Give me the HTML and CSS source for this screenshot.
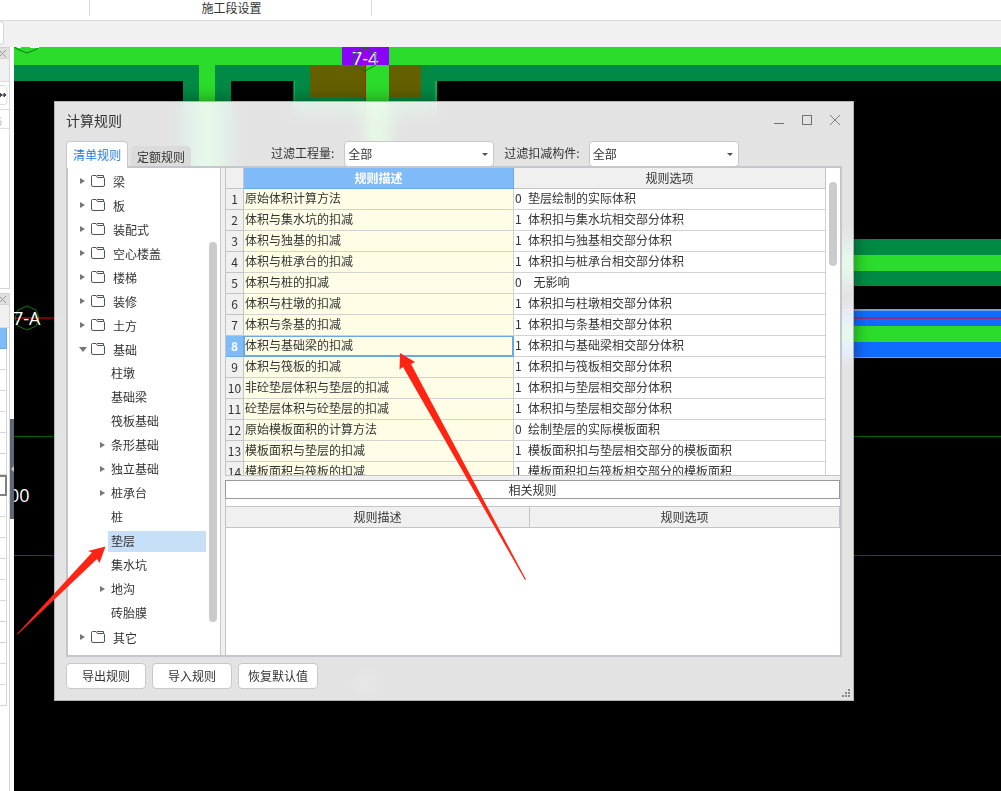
FILE: index.html
```html
<!DOCTYPE html>
<html lang="zh-CN">
<head>
<meta charset="utf-8">
<title>计算规则</title>
<link rel="stylesheet" href="styles.css">
</head>
<body>
<div class="app">
  <header class="ribbon">
    <div class="ribbon-group ribbon-group-edge"></div>
    <div class="ribbon-group ribbon-group-stage">施工段设置</div>
  </header>
  <div class="toolbar"><div class="toolbar-box"></div></div>

  <main class="workspace">
    <aside class="dock">
      <section class="dock-panel dock-panel-list">
        <div class="dock-title"><svg width="7" height="9"><path d="M-1 1 L6 8 M6 1 L-1 8"/></svg></div>
        <div class="dock-bar"></div>
        <div class="dock-tools"><svg width="8" height="20"><rect class="tool-frame" x="-6" y=".5" width="13" height="19" rx="3"/><path class="tool-arrow" d="M-2 10h3M2 10h3M0 8l2 2-2 2zM4 8l2 2-2 2z"/></svg></div>
        <div class="dock-search"><svg width="3" height="9"><path d="M-2 1h3M-2 4h3M1 4v4h-3"/></svg></div>
        <div class="dock-body"></div>
      </section>
      <section class="dock-panel dock-panel-props">
        <div class="dock-title"><svg width="7" height="9"><path d="M-1 1 L6 8 M6 1 L-1 8"/></svg></div>
        <div class="dock-bar"></div>
        <div class="prop-row prop-head"></div>
        <div class="prop-row"></div><div class="prop-row"></div><div class="prop-row"></div>
        <div class="prop-row"></div><div class="prop-row"></div><div class="prop-row"></div>
        <div class="prop-row prop-edit"></div>
        <div class="prop-row"></div><div class="prop-row"></div><div class="prop-row"></div>
        <div class="prop-row"></div><div class="prop-row"></div><div class="prop-row"></div>
        <div class="prop-row"></div><div class="prop-row"></div><div class="prop-row"></div>
        <div class="prop-row"></div>
      </section>
    </aside>

    <div class="canvas">
      <svg class="drawing" width="100%" height="100%" aria-hidden="true">
        <g transform="translate(-14 -47)">
          <rect class="beam" x="14" y="47" width="3000" height="18"/>
          <rect class="slab" x="14" y="65" width="3000" height="16"/>
          <rect class="slab" x="183" y="81" width="48" height="120"/>
          <rect class="beam" x="199" y="65" width="16" height="240"/>
          <rect class="slab" x="294" y="81" width="143" height="32"/>
          <path class="edge" d="M294 81v32M436 81v32"/>
          <rect class="column" x="310" y="66" width="111" height="31"/>
          <rect class="beam" x="366" y="65" width="23" height="240"/>
          <rect class="mark" x="342" y="47" width="47" height="18"/>
          <path class="axis-red" d="M365.500 65v200"/>
          <path class="axis-magenta" d="M365.500 48v17"/>
          <text class="axis-text" x="352" y="65">7-4</text>
          <path class="hex" d="M365 48l11 6v11l-11 6-11-6v-11z"/>
          <path class="hex" d="M14 47l3 2 10 4 10-4 2-2"/>
          <path class="hex-text" d="M17 47h4M30 47h9"/>
          <path class="axis-red axis-wide" d="M14 318h400"/>
          <path class="hex" d="M27 306l9 4 3 8-3 8-9 4-9-4-3-8 3-8z"/>
          <text class="axis-text" x="13" y="325">7-A</text>
          <text class="axis-text" x="9" y="502">00</text>
          <path class="grid" d="M14 436.500H3000M14 555.500H3000"/>
          <rect class="slab" x="700" y="239" width="2000" height="47"/>
          <rect class="beam" x="700" y="255" width="2000" height="16"/>
          <rect class="wall-edge" x="700" y="309" width="2000" height="49"/>
          <rect class="wall" x="700" y="311" width="2000" height="46"/>
          <rect class="wall-axis" x="700" y="317" width="2000" height="2"/>
          <rect class="beam" x="700" y="326" width="2000" height="16"/>
          <ellipse class="hidden-label" cx="367" cy="684" rx="9" ry="7"/>
        </g>
      </svg>
      <div class="dock-handle"></div>

      <section class="dialog" role="dialog" aria-label="计算规则">
        <header class="dialog-title">
          <h1>计算规则</h1>
          <button class="win-btn" aria-label="最小化"><svg width="12" height="12"><path d="M1 9.500h10"/></svg></button>
          <button class="win-btn" aria-label="最大化"><svg width="12" height="12"><rect x="1.500" y="1.500" width="9" height="9"/></svg></button>
          <button class="win-btn win-close" aria-label="关闭"><svg width="12" height="12"><path d="M1 1l10 10M11 1L1 11"/></svg></button>
        </header>

        <div class="tab-row">
          <button class="tab tab-active">清单规则</button>
          <button class="tab">定额规则</button>
          <div class="filters">
            <label for="quantity">过滤工程量:</label>
            <span class="combo"><select id="quantity"><option>全部</option></select></span>
            <label for="component">过滤扣减构件:</label>
            <span class="combo"><select id="component"><option>全部</option></select></span>
          </div>
        </div>

        <div class="content">
          <nav class="tree">
            <ul>
              <li class="node closed"><svg class="folder" width="14" height="12"><path d="M.500 10V1.500Q.500.500 1.500.500H5l1.500 2h6q1 0 1 1V10q0 1.500-1.500 1.500H2Q.500 11.500.500 10zM6 .500h6.500V3"/></svg>梁</li>
              <li class="node closed"><svg class="folder" width="14" height="12"><path d="M.500 10V1.500Q.500.500 1.500.500H5l1.500 2h6q1 0 1 1V10q0 1.500-1.500 1.500H2Q.500 11.500.500 10zM6 .500h6.500V3"/></svg>板</li>
              <li class="node closed"><svg class="folder" width="14" height="12"><path d="M.500 10V1.500Q.500.500 1.500.500H5l1.500 2h6q1 0 1 1V10q0 1.500-1.500 1.500H2Q.500 11.500.500 10zM6 .500h6.500V3"/></svg>装配式</li>
              <li class="node closed"><svg class="folder" width="14" height="12"><path d="M.500 10V1.500Q.500.500 1.500.500H5l1.500 2h6q1 0 1 1V10q0 1.500-1.500 1.500H2Q.500 11.500.500 10zM6 .500h6.500V3"/></svg>空心楼盖</li>
              <li class="node closed"><svg class="folder" width="14" height="12"><path d="M.500 10V1.500Q.500.500 1.500.500H5l1.500 2h6q1 0 1 1V10q0 1.500-1.500 1.500H2Q.500 11.500.500 10zM6 .500h6.500V3"/></svg>楼梯</li>
              <li class="node closed"><svg class="folder" width="14" height="12"><path d="M.500 10V1.500Q.500.500 1.500.500H5l1.500 2h6q1 0 1 1V10q0 1.500-1.500 1.500H2Q.500 11.500.500 10zM6 .500h6.500V3"/></svg>装修</li>
              <li class="node closed"><svg class="folder" width="14" height="12"><path d="M.500 10V1.500Q.500.500 1.500.500H5l1.500 2h6q1 0 1 1V10q0 1.500-1.500 1.500H2Q.500 11.500.500 10zM6 .500h6.500V3"/></svg>土方</li>
              <li class="node open"><svg class="folder" width="14" height="12"><path d="M.500 10V1.500Q.500.500 1.500.500H5l1.500 2h6q1 0 1 1V10q0 1.500-1.500 1.500H2Q.500 11.500.500 10zM6 .500h6.500V3"/></svg>基础</li>
              <li class="node child"><span>柱墩</span></li>
              <li class="node child"><span>基础梁</span></li>
              <li class="node child"><span>筏板基础</span></li>
              <li class="node child closed"><span>条形基础</span></li>
              <li class="node child closed"><span>独立基础</span></li>
              <li class="node child closed"><span>桩承台</span></li>
              <li class="node child"><span>桩</span></li>
              <li class="node child selected"><span>垫层</span></li>
              <li class="node child"><span>集水坑</span></li>
              <li class="node child closed"><span>地沟</span></li>
              <li class="node child"><span>砖胎膜</span></li>
              <li class="node closed"><svg class="folder" width="14" height="12"><path d="M.500 10V1.500Q.500.500 1.500.500H5l1.500 2h6q1 0 1 1V10q0 1.500-1.500 1.500H2Q.500 11.500.500 10zM6 .500h6.500V3"/></svg>其它</li>
            </ul>
            <div class="tree-scroll"><div class="thumb"></div></div>
          </nav>

          <div class="rules">
            <div class="rules-main">
              <table class="grid-table">
                <colgroup><col class="col-no"><col class="col-desc"><col></colgroup>
                <thead><tr><th></th><th class="head-active">规则描述</th><th>规则选项</th></tr></thead>
                <tbody>
                  <tr><th>1</th><td>原始体积计算方法</td><td><span class="code">0</span>垫层绘制的实际体积</td></tr>
                  <tr><th>2</th><td>体积与集水坑的扣减</td><td><span class="code">1</span>体积扣与集水坑相交部分体积</td></tr>
                  <tr><th>3</th><td>体积与独基的扣减</td><td><span class="code">1</span>体积扣与独基相交部分体积</td></tr>
                  <tr><th>4</th><td>体积与桩承台的扣减</td><td><span class="code">1</span>体积扣与桩承台相交部分体积</td></tr>
                  <tr><th>5</th><td>体积与桩的扣减</td><td><span class="code">0</span>&nbsp; 无影响</td></tr>
                  <tr><th>6</th><td>体积与柱墩的扣减</td><td><span class="code">1</span>体积扣与柱墩相交部分体积</td></tr>
                  <tr><th>7</th><td>体积与条基的扣减</td><td><span class="code">1</span>体积扣与条基相交部分体积</td></tr>
                  <tr class="current"><th>8</th><td>体积与基础梁的扣减</td><td><span class="code">1</span>体积扣与基础梁相交部分体积</td></tr>
                  <tr><th>9</th><td>体积与筏板的扣减</td><td><span class="code">1</span>体积扣与筏板相交部分体积</td></tr>
                  <tr><th>10</th><td>非砼垫层体积与垫层的扣减</td><td><span class="code">1</span>体积扣与垫层相交部分体积</td></tr>
                  <tr><th>11</th><td>砼垫层体积与砼垫层的扣减</td><td><span class="code">1</span>体积扣与垫层相交部分体积</td></tr>
                  <tr><th>12</th><td>原始模板面积的计算方法</td><td><span class="code">0</span>绘制垫层的实际模板面积</td></tr>
                  <tr><th>13</th><td>模板面积与垫层的扣减</td><td><span class="code">1</span>模板面积扣与垫层相交部分的模板面积</td></tr>
                  <tr><th>14</th><td>模板面积与筏板的扣减</td><td><span class="code">1</span>模板面积扣与筏板相交部分的模板面积</td></tr>
                </tbody>
              </table>
              <div class="rules-scroll"><div class="thumb"></div></div>
            </div>
            <div class="related">
              <h2>相关规则</h2>
              <table class="related-table">
                <colgroup><col class="col-related"><col></colgroup>
                <thead><tr><th>规则描述</th><th>规则选项</th></tr></thead>
              </table>
            </div>
          </div>
        </div>

        <footer class="actions">
          <button class="btn">导出规则</button>
          <button class="btn">导入规则</button>
          <button class="btn">恢复默认值</button>
          <svg class="grip" width="9" height="9"><path d="M6 0h2v2h-2zM3 3h2v2h-2zM6 3h2v2h-2zM0 6h2v2h-2zM3 6h2v2h-2zM6 6h2v2h-2z"/></svg>
        </footer>
      </section>
    </div>
  </main>

  <svg class="arrows" width="100%" height="100%" aria-hidden="true">
    <path d="M400 353L415 362 411 364 526 579.500 525 580 403 367 399.500 369.500z"/>
    <path d="M105.500 546.500L99.500 563 97 559 17.500 634.500 17 634 92 552.500 88 551z"/>
  </svg>
</div>
</body>
</html>
```

FILE: styles.css
```css
*, *::before, *::after { box-sizing: border-box; }

body {
  margin: 0;
  font-family: "Noto Sans CJK SC", sans-serif;
  font-size: 12px;
  color: #333;
}

h1, h2, ul { margin: 0; padding: 0; font-weight: normal; list-style: none; }

button, select { font: inherit; color: inherit; }

svg { display: block; flex: none; }

.app {
  position: relative;
  display: flex;
  flex-direction: column;
  height: 100vh;
  overflow: hidden;
}

/* top bars */
.ribbon {
  display: flex;
  flex: none;
  height: 21px;
  padding-bottom: 4px;
  background: #fff;
  border-bottom: 1px solid #dadada;
}
.ribbon-group { border-right: 1px solid #dadada; text-align: center; line-height: 16px; }
.ribbon-group-edge { width: 90px; }
.ribbon-group-stage { width: 282px; padding-left: 2px; }

.toolbar { flex: none; height: 26px; background: #f1f1f1; }
.toolbar-box {
  width: 4px;
  height: 24px;
  background: #fff;
  border: 1px solid #d5d5d5;
  border-left: 0;
  border-radius: 0 4px 4px 0;
}

.workspace { display: flex; flex: 1; min-height: 0; }

/* left dock */
.dock {
  display: flex;
  flex-direction: column;
  flex: none;
  gap: 4px;
  width: 14px;
  padding-right: 4px;
  background: #fff;
}
.dock-panel { border-right: 1px solid #d6d6d6; }
.dock-panel-list { height: 242px; border-bottom: 1px solid #d6d6d6; }
.dock-panel-props { flex: 1; }
.dock-title { height: 12px; padding-top: 1px; background: #e0e0e0; border: 1px solid #d0d0d0; border-width: 1px 0; }
.dock-title svg { fill: none; stroke: #999; }
.dock-bar { height: 23px; background: #f0f0f0; border-bottom: 1px solid #dcdcdc; }
.dock-tools { height: 28px; padding-top: 3px; border-bottom: 1px solid #dcdcdc; }
.tool-frame { fill: #fff; stroke: #ddd; }
.tool-arrow { fill: #445; stroke: #445; }
.dock-search { height: 19px; padding-top: 7px; border-bottom: 1px solid #dcdcdc; }
.dock-search svg { fill: none; stroke: #bbb; }
.prop-row { height: 21px; width: 7px; border: 1px solid #d6d6d6; border-width: 0 1px 1px 0; }
.prop-head { background: #80bbf9; border-color: #68a9e8; }
.prop-edit { border: 2px solid #808080; border-left: 0; }

/* drawing area */
.canvas { position: relative; flex: 1; min-width: 0; background: #000; }
.drawing { position: absolute; inset: 0; }
.beam { fill: #2cdc2c; }
.slab { fill: #008a45; }
.edge { stroke: #00e070; }
.column { fill: #646000; }
.mark { fill: #8c00ff; }
.wall { fill: #106cff; }
.wall-edge { fill: #6f9fe8; }
.wall-axis { fill: #903080; }
.axis-red { stroke: #a02800; fill: none; }
.axis-wide { stroke: #800000; stroke-width: 2px; }
.axis-magenta { stroke: #c80090; }
.grid { stroke: #006400; }
.hex { stroke: #087a08; fill: none; }
.hex-text { stroke: #fff; stroke-width: 2px; }
.axis-text { fill: #fff; font: 18px "Open Sans", "Noto Sans", sans-serif; }
.hidden-label { fill: #666; }
.dock-handle {
  position: absolute;
  left: -4px;
  top: 372px;
  width: 4px;
  height: 100px;
  background: #5d6874;
}
.dock-handle::after {
  content: "";
  display: block;
  width: 3px;
  margin: 0 0 0 1px;
  border: 3px solid transparent;
  border-left: 0;
  border-right-color: #c0c6cc;
  transform: translateY(47px);
}

/* rule dialog */
.dialog {
  position: absolute;
  inset: 54px 147px 90px 40px;
  display: flex;
  flex-direction: column;
  padding: 0 11px;
  border: 1px solid #b4b4b4;
  background: rgba(255, 255, 255, .89);
  backdrop-filter: blur(9px);
  box-shadow: 0 0 16px rgba(0, 0, 0, .4);
}
.dialog-title { display: flex; align-items: center; gap: 16px; height: 39px; padding: 0 1px 3px 0; flex: none; }
.dialog-title h1 { flex: 1; font-size: 14px; line-height: 20px; }
.win-btn { padding: 0; border: 0; background: none; }
.win-btn svg { fill: none; stroke: #707070; }
.win-close svg { stroke: #808080; }

.tab-row { display: flex; align-items: flex-end; flex: none; height: 26px; }
.tab {
  height: 21px;
  width: 60px;
  margin-left: 3px;
  padding: 0;
  border: 0;
  border-radius: 4px 4px 0 0;
  background: #dbdbdb;
  line-height: 20px;
}
.tab-active {
  position: relative;
  z-index: 1;
  height: 27px;
  width: 62px;
  margin: 0 0 -1px;
  border: 1px solid #c6c8ce;
  border-bottom: 0;
  background: #fff;
  color: #2a80e0;
  line-height: 24px;
}
.filters { display: flex; align-items: center; gap: 10px; margin-left: 80px; white-space: nowrap; }
.filters label { line-height: 24px; padding-bottom: 2px; }
.combo { position: relative; display: block; width: 150px; }
.combo + label { margin-right: -1px; }
.combo select {
  display: block;
  width: 100%;
  height: 26px;
  padding: 0 3px 2px;
  border: 1px solid #c8c8c8;
  border-radius: 4px;
  background: #fff;
  appearance: none;
}
.combo::after {
  content: "";
  position: absolute;
  right: 6px;
  top: 12px;
  border: 3px solid transparent;
  border-top-color: #4c4f66;
  border-bottom: 0;
}

.content {
  display: flex;
  flex: 1;
  min-height: 0;
  margin-top: -1px;
  border: 2px solid #c4c6cb;
  background: #f0f0f0;
}

.tree { display: flex; flex: none; width: 153px; padding-top: 1px; background: #fff; border-right: 1px solid #c8c8c8; overflow: hidden; }
.tree ul { flex: 1; padding-left: 12px; }
.node { display: flex; align-items: center; height: 24px; white-space: nowrap; }
.node::before { content: ""; flex: none; width: 5px; margin-right: 6px; }
.closed::before { border: 3px solid transparent; border-left: 5px solid #777; border-right: 0; }
.open::before { width: 8px; margin: 0 4px 0 -1px; border: 4px solid transparent; border-top: 5px solid #777; border-bottom: 0; }
.folder { margin-right: 8px; fill: none; stroke: #4c5268; }
.child { padding-left: 20px; }
.child::before { margin-right: 3px; }
.child span { flex: 1; height: 21px; padding-left: 3px; line-height: 20px; }
.selected span { background: #c8dff8; }
.thumb { width: 8px; border-radius: 4px; background: #cbcbcb; }
.tree-scroll { flex: none; width: 14px; padding: 73px 0 0 3px; }
.tree-scroll .thumb { height: 380px; }

.rules { display: flex; flex-direction: column; flex: 1; min-width: 0; margin-left: 4px; }
.rules-main {
  display: flex;
  height: 308px;
  flex: none;
  overflow: hidden;
  background: #fff;
  border: 1px solid #c4c4c4;
  border-width: 0 0 1px 1px;
}
.rules-scroll { flex: none; width: 14px; padding: 14px 0 0 3px; }
.rules-scroll .thumb { height: 84px; }

table { border-collapse: separate; border-spacing: 0; table-layout: fixed; width: 100%; }
.grid-table { flex: 1; width: auto; height: 315px; min-width: 0; }
.col-no { width: 18px; }
.col-desc { width: 270px; }
.col-related { width: 304px; }
th, td { height: 21px; padding: 0; border: 1px solid #d2d2d2; border-width: 0 1px 1px 0; line-height: 20px; white-space: nowrap; }
th { background: #f0f0f0; border-color: #c4c4c4; font-weight: normal; }
.head-active { background: #80bbf9; border-color: #68a9e8; color: #fff; font-weight: bold; }
td { padding: 0 0 2px 1px; line-height: 18px; background: #fff; }
td:nth-child(2) { background: #fffde6; }
.code { display: inline-block; width: 13px; }
.current th { background: #80bbf9; border-color: #68a9e8; color: #fff; font-weight: bold; }
.current td:nth-child(2) { box-shadow: inset 0 0 0 1px #68a9e8; border-color: #68a9e8; }

.related { flex: 1; margin-top: 4px; background: #fff; border-left: 1px solid #c4c4c4; }
.related h2 { height: 19px; margin: 0 0 7px -1px; border: 1px solid #999; font-size: 12px; line-height: 17px; text-align: center; }
.related-table th { height: 22px; border-top-width: 1px; }

.actions { display: flex; align-items: flex-start; flex: none; gap: 6px; height: 43px; padding-top: 6px; }
.btn { width: 80px; height: 26px; padding: 0 0 1px; border: 1px solid #c8c8c8; border-radius: 4px; background: #fff; }
.grip { align-self: flex-end; margin: 0 -9px 2px auto; fill: #888; }

.arrows { position: absolute; inset: 0; pointer-events: none; fill: #ff2413; }
```
